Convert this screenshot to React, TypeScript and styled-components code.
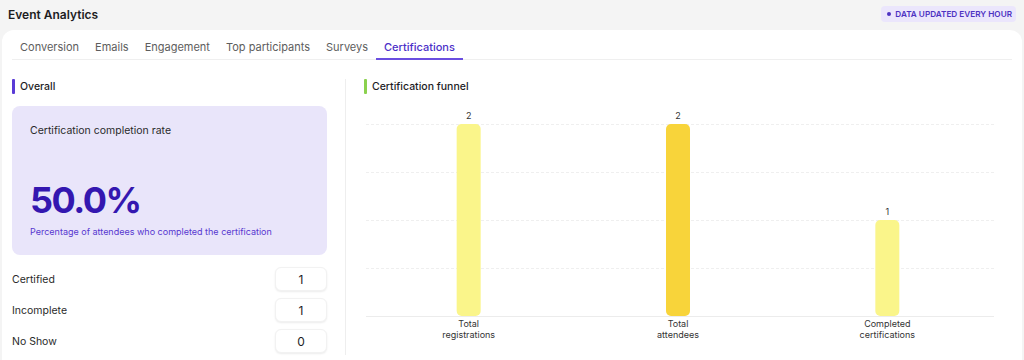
import React from "react";
import styled, { createGlobalStyle } from "styled-components";

const Global = createGlobalStyle`
  html, body { margin: 0; padding: 0; background: #f4f4f4; }
  body { font-family: Inter, "Noto Sans", sans-serif; color: #1f1f1f; }
  * { box-sizing: border-box; }
`;

const Page = styled.div`
  width: 1024px;
  height: 360px;
  overflow: hidden;
  display: flex;
  flex-direction: column;
`;

const Header = styled.header`
  height: 30px;
  padding: 0 8px 2px;
  display: flex;
  align-items: center;
  justify-content: space-between;
`;

const Title = styled.h1`
  margin: 0;
  font-size: 12px;
  font-weight: 600;
  color: #1d1d1f;
`;

const Badge = styled.div`
  display: flex;
  align-items: center;
  gap: 4px;
  height: 16px;
  padding: 0 4px 0 6px;
  border-radius: 4px;
  background: #ebe6fc;
  color: #4d32c2;
  font-size: 8.2px;
  font-weight: 600;
`;

const Dot = styled.span`
  width: 4px;
  height: 4px;
  border-radius: 50%;
  background: #4d32c2;
`;

const Card = styled.main`
  flex: 1;
  margin: 0 2px;
  background: #ffffff;
  border-radius: 12px 12px 0 0;
  display: flex;
  flex-direction: column;
`;

const Tabs = styled.nav`
  margin: 0 10px;
  display: flex;
  gap: 0;
  border-bottom: 1px solid #efefef;
`;

const Tab = styled.div<{ $active?: boolean }>`
  padding: 10px 8px 4px;
  font-size: 11px;
  line-height: 14px;
  color: ${(p) => (p.$active ? "#4b2fc8" : "#5d5d5d")};
  font-weight: ${(p) => (p.$active ? 500 : 400)};
  border-bottom: 2px solid ${(p) => (p.$active ? "#6a4ee0" : "transparent")};
  margin-bottom: -1px;
`;

const Body = styled.section`
  flex: 1;
  display: flex;
  padding: 19px 10px 0;
`;

const Left = styled.div`
  width: 315px;
  display: flex;
  flex-direction: column;
`;

const Divider = styled.div`
  width: 1px;
  background: #eeeeee;
  margin: 0 18px 5px 18px;
`;

const Right = styled.div`
  flex: 1;
  display: flex;
  flex-direction: column;
`;

const SectionTitle = styled.div<{ $accent: string }>`
  display: flex;
  align-items: center;
  gap: 5px;
  height: 15px;
  font-size: 10.5px;
  font-weight: 500;
  color: #1d1d1f;
  &::before {
    content: "";
    width: 3px;
    height: 15px;
    border-radius: 1px;
    background: ${(p) => p.$accent};
  }
`;

const RateCard = styled.div`
  margin-top: 12px;
  height: 149px;
  border-radius: 8px;
  background: #e9e5fa;
  padding: 18px 18px 0;
  display: flex;
  flex-direction: column;
`;

const RateLabel = styled.div`
  font-size: 10.5px;
  color: #2a2a2a;
`;

const RateValue = styled.div`
  margin-top: 43px;
  font-size: 36px;
  font-weight: 700;
  letter-spacing: -1.5px;
  line-height: 40px;
  color: #3417b0;
`;

const RateHint = styled.div`
  margin-top: 6px;
  font-size: 9px;
  color: #5737d0;
`;

const Stats = styled.div`
  margin-top: 12px;
  display: flex;
  flex-direction: column;
  gap: 7px;
`;

const StatRow = styled.div`
  display: flex;
  align-items: center;
  justify-content: space-between;
`;

const StatLabel = styled.span`
  font-size: 10.5px;
  color: #2a2a2a;
`;

const StatValue = styled.span`
  width: 52px;
  height: 24px;
  border-radius: 6px;
  background: #fff;
  border: 1px solid #f2f2f2;
  box-shadow: 0 1px 2px rgba(0, 0, 0, 0.08);
  display: flex;
  align-items: center;
  justify-content: center;
  font-size: 12px;
  color: #1d1d1f;
`;

const ChartWrap = styled.div`
  margin-top: 7px;
  width: 640px;
`;

const funnel = [
  { value: 2, color: "#faf58a", label: ["Total", "registrations"] },
  { value: 2, color: "#f8d43a", label: ["Total", "attendees"] },
  { value: 1, color: "#faf58a", label: ["Completed", "certifications"] },
];

function FunnelChart() {
  const x0 = 2;
  const x1 = 630;
  const top = 23;
  const bottom = 215;
  const max = 2;
  const step = (x1 - x0) / funnel.length;
  const grid = [0, 1, 2, 3, 4].map((i) => top + i * 48);
  const font = { fontSize: 9, fill: "#333", fontFamily: "Inter, sans-serif" };
  return (
    <svg width="640" height="245" viewBox="0 0 640 245">
      {grid.map((y, i) => (
        <line
          key={i}
          x1={x0}
          x2={x1}
          y1={y + 0.5}
          y2={y + 0.5}
          stroke={i === 4 ? "#ececec" : "#efefef"}
          strokeDasharray={i === 4 ? undefined : "3 2"}
        />
      ))}
      {funnel.map((d, i) => {
        const cx = x0 + step * i + step / 2 - 2;
        const h = ((bottom - top) * d.value) / max;
        return (
          <g key={i}>
            <rect x={cx - 12} y={bottom - h} width={24} height={h} rx={5} fill={d.color} />
            <text x={cx} y={bottom - h - 5} textAnchor="middle" {...font}>
              {d.value}
            </text>
            <text x={cx} y={bottom + 11} textAnchor="middle" {...font}>
              {d.label[0]}
            </text>
            <text x={cx} y={bottom + 22} textAnchor="middle" {...font}>
              {d.label[1]}
            </text>
          </g>
        );
      })}
    </svg>
  );
}

const tabs = ["Conversion", "Emails", "Engagement", "Top participants", "Surveys", "Certifications"];
const stats = [
  { label: "Certified", value: 1 },
  { label: "Incomplete", value: 1 },
  { label: "No Show", value: 0 },
];

export default function App() {
  return (
    <Page>
      <Global />
      <Header>
        <Title>Event Analytics</Title>
        <Badge>
          <Dot />
          DATA UPDATED EVERY HOUR
        </Badge>
      </Header>
      <Card>
        <Tabs>
          {tabs.map((t) => (
            <Tab key={t} $active={t === "Certifications"}>
              {t}
            </Tab>
          ))}
        </Tabs>
        <Body>
          <Left>
            <SectionTitle $accent="#5a3bd6">Overall</SectionTitle>
            <RateCard>
              <RateLabel>Certification completion rate</RateLabel>
              <RateValue>50.0%</RateValue>
              <RateHint>Percentage of attendees who completed the certification</RateHint>
            </RateCard>
            <Stats>
              {stats.map((s) => (
                <StatRow key={s.label}>
                  <StatLabel>{s.label}</StatLabel>
                  <StatValue>{s.value}</StatValue>
                </StatRow>
              ))}
            </Stats>
          </Left>
          <Divider />
          <Right>
            <SectionTitle $accent="#8bd14e">Certification funnel</SectionTitle>
            <ChartWrap>
              <FunnelChart />
            </ChartWrap>
          </Right>
        </Body>
      </Card>
    </Page>
  );
}
